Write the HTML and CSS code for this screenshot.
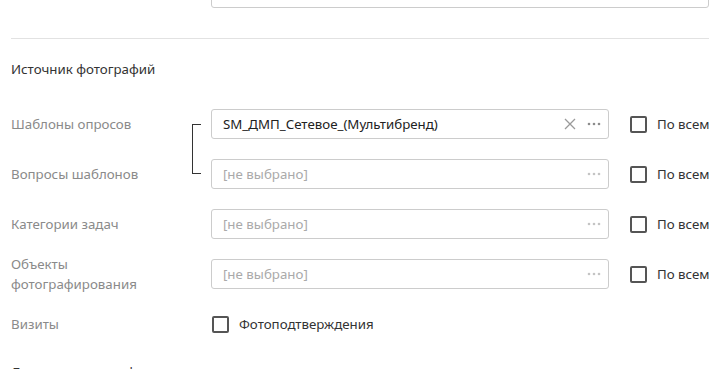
FILE: index.html
```html
<!DOCTYPE html>
<html lang="ru">
<head>
  <meta charset="UTF-8" />
  <meta name="viewport" content="width=device-width, initial-scale=1.0" />
  <title>Источник фотографий</title>
  <link rel="stylesheet" href="styles.css">
</head>
<body>
  <div class="page">
    <div class="campo-topo"></div>

    <hr class="divisor">

    <div class="secao">Источник фотографий</div>

    <div class="filtros">
      <div class="rotulo">Шаблоны опросов</div>
      <div class="ligacao"></div>
      <div class="campo">
        <span class="valor">SM_ДМП_Сетевое_(Мультибренд)</span>
        <svg class="limpar" width="12" height="12" viewBox="0 0 12 12"><path d="M1 1L11 11M11 1L1 11" stroke="#9a9a9a" stroke-width="1.3" fill="none"/></svg>
        <svg class="mais ativo" width="14" height="4" viewBox="0 0 14 4"><circle cx="2" cy="2" r="1.3"/><circle cx="7" cy="2" r="1.3"/><circle cx="12" cy="2" r="1.3"/></svg>
      </div>
      <label class="opcao"><span class="caixa"></span>По всем</label>

      <div class="rotulo">Вопросы шаблонов</div>
      <div class="campo">
        <span class="vazio">[не выбрано]</span>
        <svg class="mais" width="14" height="4" viewBox="0 0 14 4"><circle cx="2" cy="2" r="1.3"/><circle cx="7" cy="2" r="1.3"/><circle cx="12" cy="2" r="1.3"/></svg>
      </div>
      <label class="opcao"><span class="caixa"></span>По всем</label>

      <div class="rotulo">Категории задач</div>
      <div></div>
      <div class="campo">
        <span class="vazio">[не выбрано]</span>
        <svg class="mais" width="14" height="4" viewBox="0 0 14 4"><circle cx="2" cy="2" r="1.3"/><circle cx="7" cy="2" r="1.3"/><circle cx="12" cy="2" r="1.3"/></svg>
      </div>
      <label class="opcao"><span class="caixa"></span>По всем</label>

      <div class="rotulo">Объекты<br>фотографирования</div>
      <div></div>
      <div class="campo">
        <span class="vazio">[не выбрано]</span>
        <svg class="mais" width="14" height="4" viewBox="0 0 14 4"><circle cx="2" cy="2" r="1.3"/><circle cx="7" cy="2" r="1.3"/><circle cx="12" cy="2" r="1.3"/></svg>
      </div>
      <label class="opcao"><span class="caixa"></span>По всем</label>

      <div class="rotulo">Визиты</div>
      <div></div>
      <label class="opcao visitas"><span class="caixa"></span>Фотоподтверждения</label>
    </div>

    <div class="secao proxima">Дополнительные фильтры</div>
  </div>
</body>
</html>
```

FILE: styles.css
```css
body {
  margin: 0;
  font-family: 'Noto Sans', sans-serif;
  font-size: 13.3px;
  line-height: 20px;
  color: #333;
  background: #fff;
  overflow: hidden;
}

.page {
  padding: 0 9px 0 11px;
}

.campo-topo {
  margin: -22px 0 0 200px;
  height: 28px;
  border: 1px solid #ccc;
  border-radius: 3px;
}

.divisor {
  margin: 30px 0 0;
  border: none;
  border-top: 1px solid #e2e2e2;
}

.secao {
  margin-top: 20px;
  color: #333;
}

.filtros {
  display: grid;
  grid-template-columns: 181px 19px 398px auto;
  grid-auto-rows: 30px;
  row-gap: 20px;
  margin-top: 30px;
}

.rotulo {
  align-self: center;
  color: #8a8a8a;
}

.ligacao {
  grid-row: span 2;
  margin: 15px 10px 15px 0;
  border: 1px solid #333;
  border-right: none;
}

.campo {
  display: flex;
  align-items: center;
  border: 1px solid #ccc;
  border-radius: 3px;
  padding: 0 7px 0 11px;
}

.valor {
  flex: 1;
  color: #222;
}

.vazio {
  flex: 1;
  color: #aaa;
}

.limpar {
  margin-right: 11px;
}

.mais {
  fill: #c4c4c4;
}

.mais.ativo {
  fill: #8c8c8c;
}

.opcao {
  display: flex;
  align-items: center;
  margin-left: 21px;
  color: #333;
  white-space: nowrap;
}

.opcao.visitas {
  margin-left: 1px;
  grid-column: span 2;
}

.caixa {
  width: 13px;
  height: 13px;
  border: 2px solid #555;
  border-radius: 2px;
  margin-right: 10px;
}

.secao.proxima {
  margin-top: 23px;
}
```
